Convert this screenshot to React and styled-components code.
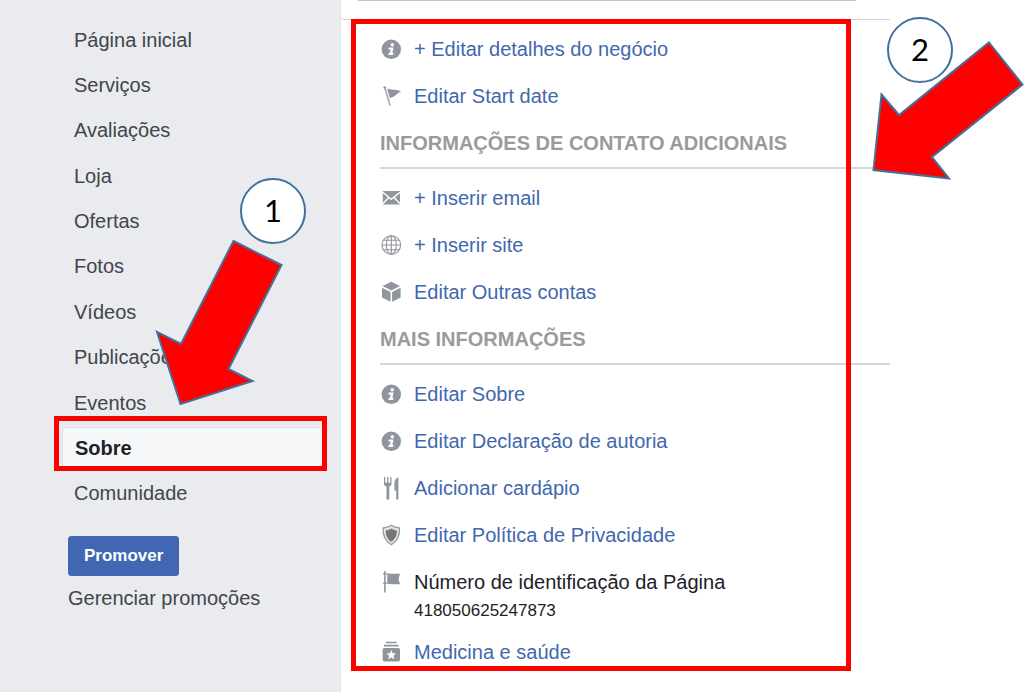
import React from "react";
import styled, { createGlobalStyle, css } from "styled-components";

const theme = {
  side: "#e9ebee",
  line: "#c9cbce",
  link: "#4267ad",
  text: "#1d2129",
  muted: "#41454d",
  heading: "#999a9c",
  icon: "#90949c",
  mark: "#ff0000",
  outline: "#41719c",
};

const GlobalStyle = createGlobalStyle`
  * {
    box-sizing: border-box;
  }
  body {
    margin: 0;
    background: #fff;
    font-family: "Liberation Sans", Arial, sans-serif;
    font-size: 20px;
    line-height: 24px;
  }
`;

const Page = styled.div`
  position: relative;
  display: flex;
  min-height: 100vh;
  overflow: hidden;
`;

const Sidebar = styled.aside`
  flex: 0 0 341px;
  padding: 17px 19px 0 62px;
  background: ${theme.side};
  border-right: 1px solid #e2e3e6;
`;

const NavList = styled.ul`
  display: grid;
  grid-auto-rows: 1fr;
  min-height: 499px;
  margin: 0;
  padding: 0;
  list-style: none;
`;

const NavItem = styled.li`
  display: grid;
  align-items: center;
`;

const NavLink = styled.a`
  padding: 0 12px;
  color: ${theme.muted};
  line-height: 40px;
  text-decoration: none;
  ${(props) =>
    props.$active &&
    css`
      background: #f6f7f9;
      border: 1px solid #dfe1e5;
      border-right: 0;
      border-radius: 2px 0 0 2px;
      color: ${theme.text};
      font-weight: bold;
    `}
`;

const Promote = styled.div`
  display: flex;
  flex-direction: column;
  align-items: flex-start;
  gap: 10px;
  padding: 20px 6px 0;
`;

const PromoteButton = styled.button`
  height: 40px;
  padding: 0 15px;
  border: 1px solid #4267b2;
  border-radius: 3px;
  background: #4267b2;
  color: #fff;
  font: bold 17px "Liberation Sans", Arial, sans-serif;
`;

const ManageLink = styled.a`
  color: ${theme.muted};
  text-decoration: none;
`;

const Content = styled.main`
  flex: 0 1 549px;
  min-width: 0;
`;

const CardEnd = styled.div`
  height: 20px;
  padding: 0 34px 0 17px;
  border-bottom: 1px solid #d3d4d8;
  border-bottom-left-radius: 4px;
`;

const Divider = styled.hr`
  height: 1px;
  margin: 0;
  border: 0;
  background: #c4c5cc;
`;

const Section = styled.section`
  padding-left: 39px;
`;

const Heading = styled.h2`
  margin: 0;
  padding: 11px 0 12px;
  border-bottom: 2px solid #d6d7d9;
  color: ${theme.heading};
  font-size: 20px;
  font-weight: bold;
  line-height: 24px;
  white-space: nowrap;
`;

const Rows = styled.ul`
  margin: 0;
  padding: 6px 0 0;
  list-style: none;
`;

const Row = styled.li`
  display: flex;
  gap: 12px;
  padding: ${(props) => (props.$tall ? "11px 0 8px" : "11px 0 12px")};
`;

const RowLink = styled.a`
  color: ${theme.link};
  text-decoration: none;
`;

const RowText = styled.div`
  color: ${theme.text};
`;

const PageId = styled.div`
  margin-top: 7px;
  font-size: 17px;
  line-height: 20px;
`;

const IconBox = styled.svg`
  flex: none;
  width: 22px;
  height: 22px;
  margin-top: 1px;
  overflow: visible;
  fill: ${theme.icon};
`;

const Frame = styled.div`
  position: absolute;
  left: ${(props) => props.$x}px;
  top: ${(props) => props.$y}px;
  width: ${(props) => props.$w}px;
  height: ${(props) => props.$h}px;
  border: 5px solid ${theme.mark};
  pointer-events: none;
`;

const Badge = styled.div`
  position: absolute;
  left: ${(props) => props.$x}px;
  top: ${(props) => props.$y}px;
  display: flex;
  align-items: center;
  justify-content: center;
  width: 66px;
  height: 66px;
  padding-bottom: 3px;
  border: 2px solid ${theme.outline};
  border-radius: 50%;
  background: #fff;
  color: #000;
  font-family: Lato, sans-serif;
  font-size: 31px;
`;

const Arrow = styled.svg`
  position: absolute;
  left: ${(props) => props.$x}px;
  top: ${(props) => props.$y}px;
  fill: ${theme.mark};
  stroke: ${theme.outline};
  stroke-width: 2;
  pointer-events: none;
`;

const drawings = {
  info: (
    <>
      <circle cx="11.3" cy="11.3" r="9.7" />
      <g fill="#fff">
        <circle cx="12.3" cy="6.7" r="1.7" />
        <path d="M8.7 9.4h4.9l-1.3 5.3h1.3l-.5 2.3H8.2l.5-2h1l.9-3.4H8.2z" />
      </g>
    </>
  ),
  pennant: (
    <>
      <circle cx="4.7" cy="2.5" r="1.3" />
      <path d="M4 3.4l2-.4 5 17.2-1.8.5z" opacity=".7" />
      <path d="M7.2 3.4C11 5.2 15 3.6 21.4 6.4 16.800 7.700 15 12 9.900 13z" />
    </>
  ),
  mail: (
    <>
      <path d="M2.8 4H20v13.500H2.800z" />
      <path
        d="M2.5 5l8.800 7.400L20.300 5M2.800 16.700l5.700-6M20 16.700l-5.700-6"
        fill="none"
        stroke="#fff"
        strokeWidth="1.4"
      />
    </>
  ),
  globe: (
    <g fill="none" stroke={theme.icon} strokeWidth="1.1">
      <circle cx="11.3" cy="11" r="9.3" />
      <ellipse cx="11.3" cy="11" rx="5" ry="9.3" />
      <path d="M11.3 1.700v18.600M2 11h18.600M3.500 6.200h15.600M3.500 15.800h15.600" />
    </g>
  ),
  cube: (
    <>
      <path d="M11.3.8L20 5.100l-8.700 4.500-8.700-4.500z" />
      <path d="M2 6.800l8.500 4.300v9.700L2 16.400z" />
      <path d="M20.600 6.800l-8.500 4.300v9.700l8.500-4.400z" />
    </>
  ),
  cutlery: (
    <>
      <path d="M4 0h1.200v5.800h1.900V0h1.300v5.800h1.900V0h1.200v6.800c0 1.400-.8 2.200-2.200 2.700V22.500H6.500V9.500C4.800 9 4 8.200 4 6.800z" />
      <path d="M18.400.2v22.300h-2.200v-9h-1.800V6.800c0-3 1.200-5.600 4-6.600z" />
    </>
  ),
  shield: (
    <>
      <path
        d="M11.3 1.300c2.400 1.700 5 2.500 8.200 2.700.4 7.500-1.900 13-8.200 16.700C5 17 2.700 11.500 3.100 4c3.200-.2 5.800-1 8.200-2.700z"
        fill="#e4e5e7"
        stroke="#999b9e"
        strokeWidth="1.3"
      />
      <path
        d="M11.3 4.500c1.700 1.100 3.400 1.700 5.600 1.900.1 5-1.500 8.600-5.600 11.300-4.100-2.700-5.700-6.300-5.600-11.300 2.200-.2 3.900-.8 5.600-1.900z"
        fill="#747678"
      />
    </>
  ),
  banner: (
    <>
      <path d="M4.100 0h1.600v21.500H4.100z" />
      <path d="M3 2.200h4v1.200H3zM3 11.500h4v1.200H3z" />
      <path d="M7.300 2.300c4 .6 8.500.7 12.700.4l-1.500 5.200 1.500 5.300c-4.200.3-8.700.2-12.700-.4z" />
    </>
  ),
  category: (
    <>
      <path d="M6 .8h10.600v1.500H6zM4 3.800h14.600v1.600H4z" />
      <path
        fillRule="evenodd"
        d="M4.500 7h13.600c1.200 0 1.900.7 1.900 1.900v9.600c0 1.200-.7 1.900-1.900 1.900H4.500c-1.200 0-1.900-.7-1.900-1.900V8.900C2.600 7.700 3.300 7 4.500 7zm6.800 1.900l-1.400 3.300-3.500.3 2.700 2.300-.8 3.500 3-1.900 3 1.900-.8-3.500 2.700-2.300-3.500-.3z"
      />
    </>
  ),
};

const Icon = ({ name }) => (
  <IconBox viewBox="0 0 22 22" aria-hidden="true">
    {drawings[name]}
  </IconBox>
);

const pages = [
  "Página inicial",
  "Serviços",
  "Avaliações",
  "Loja",
  "Ofertas",
  "Fotos",
  "Vídeos",
  "Publicações",
  "Eventos",
  "Sobre",
  "Comunidade",
];

const sections = [
  {
    rows: [
      { icon: "info", label: "+ Editar detalhes do negócio" },
      { icon: "pennant", label: "Editar Start date" },
    ],
  },
  {
    title: "INFORMAÇÕES DE CONTATO ADICIONAIS",
    rows: [
      { icon: "mail", label: "+ Inserir email" },
      { icon: "globe", label: "+ Inserir site" },
      { icon: "cube", label: "Editar Outras contas" },
    ],
  },
  {
    title: "MAIS INFORMAÇÕES",
    rows: [
      { icon: "info", label: "Editar Sobre" },
      { icon: "info", label: "Editar Declaração de autoria" },
      { icon: "cutlery", label: "Adicionar cardápio" },
      { icon: "shield", label: "Editar Política de Privacidade" },
      {
        icon: "banner",
        label: "Número de identificação da Página",
        id: "418050625247873",
      },
      { icon: "category", label: "Medicina e saúde" },
    ],
  },
];

const App = () => (
  <>
    <GlobalStyle />
    <Page>
      <Sidebar>
        <nav>
          <NavList>
            {pages.map((page) => (
              <NavItem key={page}>
                <NavLink href="#" $active={page === "Sobre"}>
                  {page}
                </NavLink>
              </NavItem>
            ))}
          </NavList>
        </nav>
        <Promote>
          <PromoteButton type="button">Promover</PromoteButton>
          <ManageLink href="#">Gerenciar promoções</ManageLink>
        </Promote>
      </Sidebar>

      <Content>
        <CardEnd>
          <Divider />
        </CardEnd>
        {sections.map((section, i) => (
          <Section key={i}>
            {section.title && <Heading>{section.title}</Heading>}
            <Rows>
              {section.rows.map((row) => (
                <Row key={row.label} $tall={!!row.id}>
                  <Icon name={row.icon} />
                  {row.id ? (
                    <RowText>
                      {row.label}
                      <PageId>{row.id}</PageId>
                    </RowText>
                  ) : (
                    <RowLink href="#">{row.label}</RowLink>
                  )}
                </Row>
              ))}
            </Rows>
          </Section>
        ))}
      </Content>

      {/* tutorial marks drawn over the page */}
      <Frame $x={54} $y={416} $w={273} $h={55} />
      <Frame $x={351} $y={19} $w={500} $h={652} />
      <Arrow $x={150} $y={230} width="140" height="180" viewBox="150 230 140 180">
        <path d="M233.5 241l48 24-53 104 24 12-72 23-23.500-72 24 12z" />
      </Arrow>
      <Arrow $x={864} $y={34} width="160" height="150" viewBox="864 34 160 150">
        <path d="M989 42.500l33.500 42L932 157l17 21.500-75.500-8.500 8-75.500L899 115z" />
      </Arrow>
      <Badge $x={240} $y={178}>1</Badge>
      <Badge $x={887} $y={17}>2</Badge>
    </Page>
  </>
);

export default App;
